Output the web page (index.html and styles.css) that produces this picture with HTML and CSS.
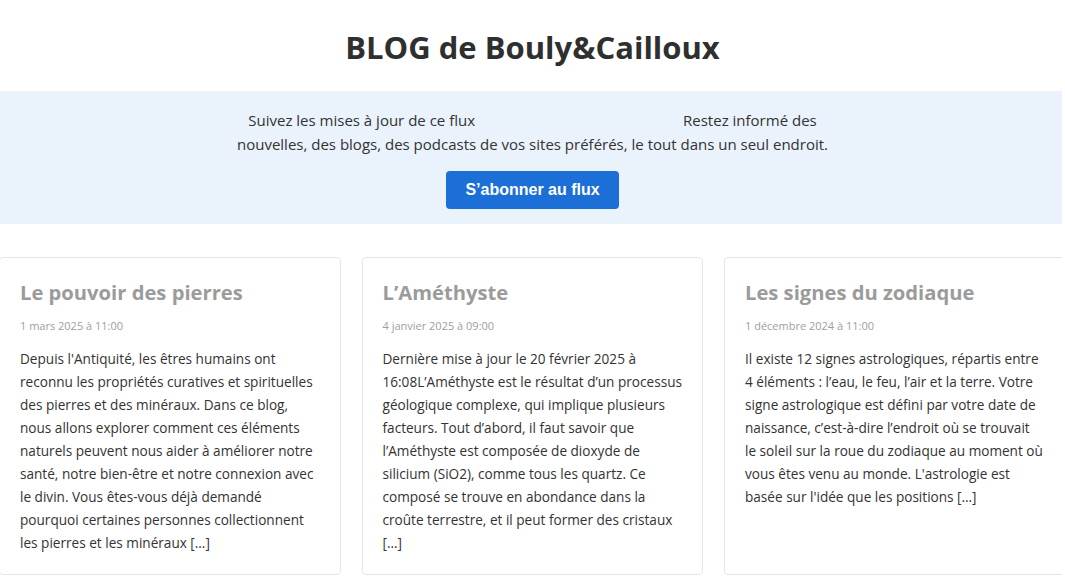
FILE: index.html
```html
<!DOCTYPE html>
<html lang="fr">
<head>
<meta charset="utf-8">
<title>BLOG de Bouly&amp;Cailloux</title>
<link rel="stylesheet" href="styles.css">
</head>
<body>
<div class="page">
<header class="site-header">
  <h1 class="site-title">BLOG de Bouly&amp;Cailloux</h1>
</header>
<section class="feed-banner">
  <p class="feed-text"><span>Suivez les mises à jour de ce flux</span><span class="feed-gap"></span><span>Restez informé des</span><br>nouvelles, des blogs, des podcasts de vos sites préférés, le tout dans un seul endroit.</p>
  <a class="feed-button" href="#">S’abonner au flux</a>
</section>
<main class="posts">
  <article class="post">
    <h2 class="post-title">Le pouvoir des pierres</h2>
    <div class="post-date">1 mars 2025 à 11:00</div>
    <p class="post-excerpt">Depuis l'Antiquité, les êtres humains ont reconnu les propriétés curatives et spirituelles des pierres et des minéraux. Dans ce blog, nous allons explorer comment ces éléments naturels peuvent nous aider à améliorer notre santé, notre bien-être et notre connexion avec le divin. Vous êtes-vous déjà demandé pourquoi certaines personnes collectionnent les pierres et les minéraux […]</p>
  </article>
  <article class="post">
    <h2 class="post-title">L’Améthyste</h2>
    <div class="post-date">4 janvier 2025 à 09:00</div>
    <p class="post-excerpt">Dernière mise à jour le 20 février 2025 à 16:08L’Améthyste est le résultat d’un processus géologique complexe, qui implique plusieurs facteurs. Tout d’abord, il faut savoir que l’Améthyste est composée de dioxyde de silicium (SiO2), comme tous les quartz. Ce composé se trouve en abondance dans la croûte terrestre, et il peut former des cristaux […]</p>
  </article>
  <article class="post">
    <h2 class="post-title">Les signes du zodiaque</h2>
    <div class="post-date">1 décembre 2024 à 11:00</div>
    <p class="post-excerpt">Il existe 12 signes astrologiques, répartis entre 4 éléments : l’eau, le feu, l’air et la terre. Votre signe astrologique est défini par votre date de naissance, c’est-à-dire l’endroit où se trouvait le&nbsp;soleil sur la roue du zodiaque au moment où vous êtes venu au monde. L'astrologie est basée sur l'idée que les positions […]</p>
  </article>
</main>
</div>
</body>
</html>
```

FILE: styles.css
```css
html, body {
  margin: 0;
  padding: 0;
  background: #ffffff;
}
body {
  font-family: "Open Sans", "Noto Sans", sans-serif;
  color: #333333;
  overflow: hidden;
}
.page {
  width: 1062px;
  overflow: hidden;
}
.site-header {
  width: 1065px;
  padding: 29px 0 25px;
  text-align: center;
}
.site-title {
  margin: 0;
  font-size: 31px;
  line-height: 37px;
  font-weight: 700;
  color: #2f2f2f;
}
.feed-banner {
  background: #eaf2fb;
  padding: 17px 0 15px;
  display: flex;
  flex-direction: column;
  align-items: center;
}
.feed-text {
  margin: 0 0 15px 3px;
  font-size: 15px;
  line-height: 24px;
  text-align: center;
  color: #333;
}
.feed-gap {
  display: inline-block;
  width: 208px;
}
.feed-button {
  display: block;
  width: 173px;
  height: 38px;
  line-height: 38px;
  margin-left: 3px;
  text-align: center;
  background: #1b6fd6;
  color: #ffffff;
  border-radius: 4px;
  font-family: "Liberation Sans", Arial, sans-serif;
  font-weight: 700;
  font-size: 16px;
  text-decoration: none;
}
.posts {
  width: 1066.5px;
  margin: 33px 0 0 -1px;
  display: grid;
  grid-template-columns: repeat(3, 1fr);
  column-gap: 21px;
}
.post {
  border: 1px solid #e6e6e6;
  border-radius: 4px;
  padding: 20px;
}
.post-title {
  margin: 0;
  font-size: 20.2px;
  line-height: 28px;
  font-weight: 700;
  color: #9b9b9b;
}
.post-date {
  margin-top: 12px;
  font-size: 11px;
  line-height: 16px;
  color: #9e9e9e;
}
.post-excerpt {
  margin: 13px 0 0;
  font-size: 13.6px;
  line-height: 23px;
  color: #333333;
}
```
